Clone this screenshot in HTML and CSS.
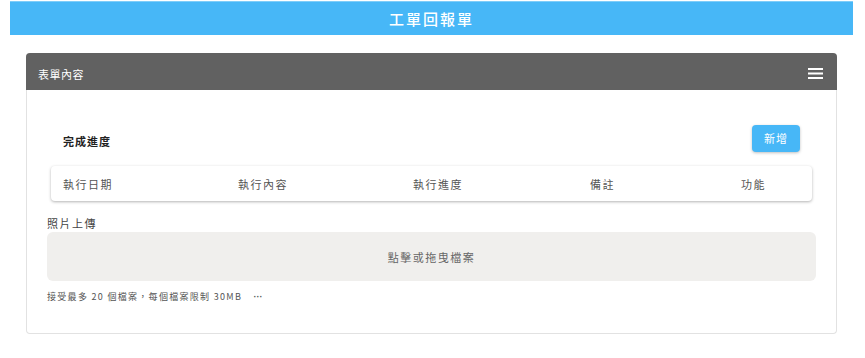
FILE: index.html
```html
<!DOCTYPE html>
<html lang="zh-Hant">
<head>
    <meta charset="UTF-8">
    <meta name="viewport" content="width=device-width, initial-scale=1.0">
    <title>工單回報單</title>
    <link rel="stylesheet" href="styles.css">
</head>
<body>
    <header class="top-bar">工單回報單</header>

    <div class="card">
        <div class="card-head">
            <span class="card-title">表單內容</span>
            <svg class="menu-icon" width="15" height="11" viewBox="0 0 15 11">
                <rect x="0" y="0" width="15" height="2" fill="#fff"/>
                <rect x="0" y="4.5" width="15" height="2" fill="#fff"/>
                <rect x="0" y="9" width="15" height="2" fill="#fff"/>
            </svg>
        </div>

        <div class="card-body">
            <div class="progress-block">
                <div class="toolbar">
                    <span class="toolbar-title">完成進度</span>
                    <button class="add-btn">新增</button>
                </div>
                <div class="table-head">
                    <div>執行日期</div>
                    <div>執行內容</div>
                    <div>執行進度</div>
                    <div>備註</div>
                    <div>功能</div>
                </div>
            </div>

            <div class="upload-label">照片上傳</div>
            <div class="upload-zone">點擊或拖曳檔案</div>
            <div class="upload-hint">接受最多 20 個檔案，每個檔案限制 30MB <span class="dots">···</span></div>
        </div>
    </div>
</body>
</html>
```

FILE: styles.css
```css
body {
    margin: 0;
    font-family: "Noto Sans CJK TC", "Noto Sans", sans-serif;
    background-color: #fff;
    color: #333;
}
.top-bar {
    margin: 1px 12px 0 10px;
    height: 34px;
    background-color: #47b7f7;
    border-top: 1px solid #7fcdf9;
    box-sizing: border-box;
    color: #fff;
    font-size: 15px;
    font-weight: 500;
    letter-spacing: 2px;
    display: flex;
    align-items: center;
    justify-content: center;
}
.card {
    margin: 18px 0 0 26px;
    width: 811px;
    height: 281px;
    box-sizing: border-box;
    border: 1px solid #e2e2e2;
    border-top: none;
    border-radius: 4px;
}
.card-head {
    height: 37px;
    margin: 0 -1px;
    background-color: #616161;
    border-radius: 4px 4px 0 0;
    padding: 0 14px 0 12px;
    display: flex;
    align-items: center;
    justify-content: space-between;
}
.card-title {
    color: #fff;
    font-size: 11px;
    letter-spacing: 0.5px;
    padding-top: 5px;
}
.menu-icon {
    margin-top: 4px;
}
.card-body {
    padding: 28px 20px 0 20px;
}
.progress-block {
    margin: 0 4px 0 4px;
}
.toolbar {
    height: 48px;
    padding: 0 12px;
    display: flex;
    align-items: center;
    justify-content: space-between;
}
.toolbar-title {
    font-size: 11px;
    font-weight: bold;
    letter-spacing: 1px;
    color: #222;
    margin-top: -2px;
}
.add-btn {
    width: 48px;
    height: 27px;
    border: none;
    border-radius: 4px;
    background-color: #47b7f7;
    color: #fff;
    font-family: inherit;
    font-size: 11px;
    letter-spacing: 1px;
    box-shadow: 0 1px 3px rgba(0, 0, 0, 0.25);
    margin-top: -8px;
}
.table-head {
    height: 35px;
    border-radius: 4px;
    box-shadow: 0 1px 3px rgba(0, 0, 0, 0.3);
    display: grid;
    grid-template-columns: 175px 175px 177px 151px 1fr;
    align-items: center;
    font-size: 11px;
    letter-spacing: 1.5px;
    color: #555;
}
.table-head div {
    padding-left: 12px;
}
.upload-label {
    margin-top: 14px;
    font-size: 11px;
    letter-spacing: 1.5px;
    color: #444;
}
.upload-zone {
    margin-top: 1px;
    height: 49px;
    background-color: #f0efed;
    border-radius: 6px;
    display: flex;
    align-items: center;
    justify-content: center;
    font-size: 11px;
    letter-spacing: 1.5px;
    color: #666;
}
.upload-hint {
    margin-top: 9px;
    font-size: 9px;
    letter-spacing: 1.3px;
    color: #555;
}
.dots {
    margin-left: 8px;
    letter-spacing: 0;
    font-family: "Liberation Sans", sans-serif;
    font-weight: bold;
}
```
